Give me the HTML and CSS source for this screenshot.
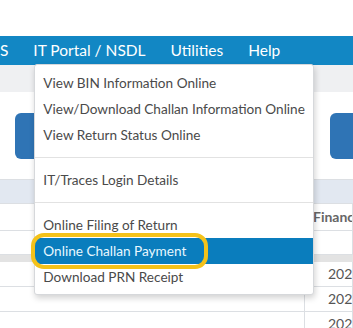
FILE: index.html
```html
<!DOCTYPE html>
<html lang="en">
<head>
	<meta charset="utf-8">
	<title>IT Portal / NSDL</title>
	<link rel="stylesheet" href="styles.css">
</head>
<body>
	<div class="top"></div>

	<nav class="menubar">
		<div class="menu cut">TDS</div>
		<div class="menu open"><span>IT Portal / NSDL</span><ul class="dropdown">
				<li>View BIN Information Online</li>
				<li>View/Download Challan Information Online</li>
				<li>View Return Status Online</li>
				<li class="divider"></li>
				<li>IT/Traces Login Details</li>
				<li class="divider"></li>
				<li>Online Filing of Return</li>
				<li class="active">Online Challan Payment</li>
				<li>Download PRN Receipt</li>
			</ul></div>
		<div class="menu">Utilities</div>
		<div class="menu">Help</div>
	</nav>

	<div class="subbar"></div>

	<section class="tiles">
		<div class="tile"></div>
		<div class="tile"></div>
	</section>

	<section class="grid">
		<div class="grid-title"></div>
		<div class="grid-head">
			<div class="cell"></div>
			<div class="cell">Financial Year</div>
		</div>
		<div class="grid-filter">
			<div class="cell"></div>
			<div class="cell"></div>
		</div>
		<div class="grid-band"></div>
		<div class="row"><div class="cell"></div><div class="cell num">2023-24</div></div>
		<div class="row"><div class="cell"></div><div class="cell num">2023-24</div></div>
		<div class="row"><div class="cell"></div><div class="cell num">2023-24</div></div>
	</section>
</body>
</html>
```

FILE: styles.css
```css
html,
body {
	margin: 0;
	padding: 0;
	overflow: hidden;
	background: #fff;
	font-family: Lato, "Noto Sans", sans-serif;
}

:root {
	--blue: #1287c4;
	--line: #dcdfe3;
}

.top { height: 36px; }

.menubar {
	height: 29px;
	background: var(--blue);
	display: flex;
	align-items: center;
	gap: 25px;
	color: #fff;
	font-size: 15.5px;
	white-space: nowrap;
}

.menu { position: relative; line-height: 29px; }
.menu.cut { margin-left: -21px; }

.dropdown {
	position: absolute;
	top: 28px;
	left: 1px;
	z-index: 5;
	width: 278px;
	margin: 0;
	padding: 5px 0 4px;
	list-style: none;
	background: #fff;
	border: 1px solid #d6d8db;
	border-radius: 3px;
	box-shadow: 1px 3px 6px rgba(0, 0, 0, .18);
	color: #4a4a4a;
	font-size: 13.6px;
	line-height: 26px;
}

.dropdown li { padding: 0 8px; }

.dropdown .divider {
	height: 1px;
	margin: 9px 0;
	padding: 0;
	background: #e2e2e2;
}

.dropdown .active {
	position: relative;
	background: #0a7dbd;
	color: #e8f8ff;
}

/* annotation ring around the chosen item */
.dropdown .active::after {
	content: "";
	position: absolute;
	left: -4px;
	top: -5px;
	width: 169px;
	height: 28px;
	border: 4px solid #f4c21a;
	border-radius: 13px;
}

.subbar {
	height: 27px;
	background: #eff0f2;
}

.tiles {
	height: 88px;
	display: flex;
	align-items: center;
	gap: 155px;
	padding-left: 15px;
	border-bottom: 1px solid var(--line);
	box-sizing: border-box;
}

.tile {
	flex: none;
	width: 160px;
	height: 46px;
	background: #2f74b5;
	border-radius: 6px;
}

.grid { font-size: 14px; color: #555; }

.grid-title {
	height: 23px;
	background: #e2e8f1;
	border-bottom: 1px solid var(--line);
}

.grid-head,
.grid-filter,
.row {
	display: grid;
	grid-template-columns: 305px 1fr;
	border-bottom: 1px solid var(--line);
}

.grid-head { height: 26px; }
.grid-filter { height: 23px; }
.row { height: 24px; }

.cell {
	border-right: 1px solid var(--line);
	padding: 0 8px;
	line-height: 24px;
	white-space: nowrap;
	overflow: hidden;
}

.grid-head .cell { line-height: 26px; color: #666; font-weight: 700; }
.cell.num { padding-left: 23px; }

.grid-band {
	height: 7px;
	background: #e3e3e3;
}
```
